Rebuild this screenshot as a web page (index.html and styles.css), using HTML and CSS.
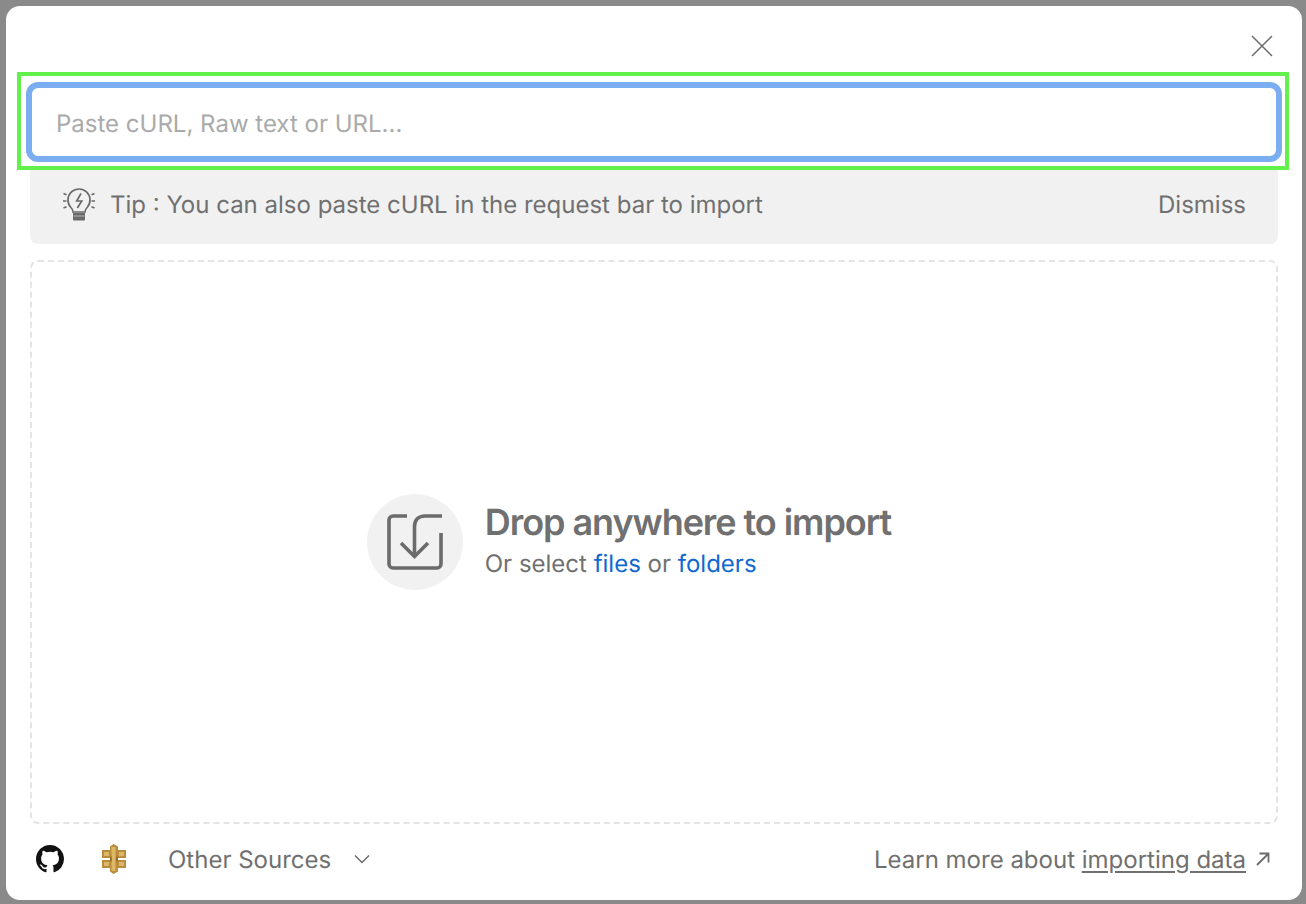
FILE: index.html
```html
<!DOCTYPE html>
<html lang="en">
<head>
<meta charset="utf-8">
<title>Import</title>
<link rel="stylesheet" href="styles.css">
</head>
<body>
<main class="modal">
  <header class="modal-head">
    <button class="close" aria-label="Close">
      <svg width="24" height="24" viewBox="0 0 24 24" fill="none" stroke="#6b6b6b" stroke-width="1.5"><path d="M2 2l20 20M22 2L2 22"/></svg>
    </button>
  </header>
  <div class="highlight">
    <div class="field">Paste cURL, Raw text or URL...</div>
  </div>
  <div class="tip">
    <div class="tip-main">
      <svg class="tip-icon" width="34" height="36" viewBox="0 0 34 36" fill="none" stroke="#6b6b6b" stroke-width="1.700">
        <path d="M11 26c0-2-1-3.500-2.500-5a11 11 0 1 1 17 0c-1.500 1.500-2.500 3-2.500 5z"/>
        <path d="M11 27h12v6.500a1 1 0 0 1-1 1H12a1 1 0 0 1-1-1z" fill="#6b6b6b" stroke="none"/>
        <path d="M11.500 30h11" stroke="#b4b4b4" stroke-width="1"/>
        <path d="M19 7.500l-4.300 7.500h5l-4.300 7"/>
        <path d="M1.500 7.500l3 1.300M1 15h3.500M1.500 22l3-1.300M32.500 7.500l-3 1.300M33 15h-3.500M32.500 22l-3-1.300"/>
      </svg>
      <span>Tip : You can also paste cURL in the request bar to import</span>
    </div>
    <span>Dismiss</span>
  </div>
  <section class="drop">
    <div class="drop-badge">
      <svg width="58" height="58" viewBox="0 0 58 58" fill="none" stroke="#6b6b6b" stroke-width="3.600">
        <path d="M21 3H7a4 4 0 0 0-4 4v44a4 4 0 0 0 4 4h44a4 4 0 0 0 4-4V20"/>
        <path d="M56 3H39c-7 0-10.500 4.500-10.500 11v28"/>
        <path d="M15 30l13.500 13.500L42 30"/>
      </svg>
    </div>
    <div class="drop-text">
      <h1 class="drop-title">Drop anywhere to import</h1>
      <p class="drop-sub">Or select <a class="link">files</a> or <a class="link">folders</a></p>
    </div>
  </section>
  <footer class="foot">
    <div class="foot-left">
      <svg class="gh" width="28" height="28" viewBox="0 0 16 16" fill="#111"><path d="M8 0C3.580 0 0 3.580 0 8c0 3.540 2.290 6.530 5.470 7.590.4.070.55-.17.55-.38 0-.19-.01-.82-.01-1.490-2.010.37-2.530-.49-2.690-.94-.09-.23-.48-.94-.82-1.130-.28-.15-.68-.52-.01-.53.630-.01 1.080.58 1.230.82.720 1.210 1.870.87 2.330.66.070-.52.280-.87.510-1.070-1.780-.2-3.640-.89-3.640-3.950 0-.87.310-1.590.820-2.150-.08-.2-.36-1.020.08-2.120 0 0 .67-.21 2.200.82a7.420 7.420 0 0 1 4 0c1.530-1.040 2.200-.82 2.200-.82.440 1.100.16 1.920.08 2.120.51.560.82 1.270.82 2.150 0 3.070-1.870 3.750-3.650 3.950.29.250.54.730.54 1.480 0 1.070-.01 1.930-.01 2.200 0 .21.150.46.550.38A8.010 8.010 0 0 0 16 8c0-4.420-3.580-8-8-8z"/></svg>
      <svg class="brand" width="26" height="30" viewBox="0 0 26 30">
        <path fill="#b98d3d" d="M9 2.500L12.500 0 17 2.500V6h8v8h-8v2h8v8h-8v3.500L12.500 30 9 27.500V24H1v-8h8v-2H1V6h8z"/>
        <path fill="#dcb766" d="M10.500 3h4v24h-4zM3 8h5v4H3zM18 8h5v4h-5zM3 18h5v4H3zM18 18h5v4h-5z"/>
        <path fill="#7e5f22" d="M9 12.500h2v5H9zM15 12.500h2v5h-2z" opacity=".6"/>
      </svg>
      <span class="sources">Other Sources
        <svg width="18" height="18" viewBox="0 0 18 18" fill="none" stroke="#6b6b6b" stroke-width="1.500"><path d="M2 5.500l7 7 7-7"/></svg>
      </span>
    </div>
    <div class="learn">
      <span>Learn more about <a class="under">importing data</a></span>
      <svg width="14" height="14" viewBox="0 0 14 14" fill="none" stroke="#6b6b6b" stroke-width="1.800"><path d="M1 13L12 2M3.500 1.500h9v9"/></svg>
    </div>
  </footer>
</main>
</body>
</html>
```
FILE: styles.css
```css
* { box-sizing: border-box; }
html, body { height: 100%; }
body {
  margin: 0;
  padding: 6px 4px 4px 6px;
  background: #8a8a8a;
  font-family: Inter, "Liberation Sans", sans-serif;
  color: #707070;
  text-rendering: geometricPrecision;
  overflow: hidden;
}
.modal {
  height: 100%;
  background: #fff;
  border-radius: 14px;
  padding: 0 24px;
  display: flex;
  flex-direction: column;
}
.modal-head {
  height: 66px;
  flex: none;
  display: flex;
  justify-content: flex-end;
  align-items: flex-start;
  padding-top: 28px;
}
.close {
  margin: 0 4px 0 0;
  padding: 0;
  border: 0;
  background: none;
  width: 24px;
  height: 24px;
  display: block;
}
.highlight {
  flex: none;
  height: 98px;
  margin: 0 -11px 0 -13px;
  padding: 6px 3px 4px 5px;
  border: 4px solid #62f04a;
  position: relative;
  z-index: 1;
}
.field {
  height: 80px;
  border: 6px solid #7aaef0;
  border-radius: 12px;
  padding: 2px 24px 0;
  display: flex;
  align-items: center;
  font-size: 24px;
  color: #aaaaaa;
}
.tip {
  flex: none;
  height: 74px;
  background: #f1f1f1;
  border-radius: 0 0 8px 8px;
  padding: 0 32px 6px;
  display: flex;
  align-items: center;
  justify-content: space-between;
  font-size: 24px;
}
.tip-main {
  display: flex;
  align-items: center;
  gap: 14px;
}
.tip-icon { display: block; }
.drop {
  flex: 1;
  margin-top: 16px;
  padding-right: 50px;
  border: 2px dashed #e4e4e4;
  border-radius: 8px;
  display: flex;
  align-items: center;
  justify-content: center;
  gap: 22px;
}
.drop-badge {
  width: 96px;
  height: 96px;
  border-radius: 50%;
  background: #f1f1f1;
  display: flex;
  align-items: center;
  justify-content: center;
}
.drop-text { padding-bottom: 4px; }
.drop-title {
  margin: 0 0 4px;
  font-size: 36px;
  line-height: 44px;
  font-weight: 600;
  letter-spacing: -1.06px;
}
.drop-sub {
  margin: 0;
  font-size: 24px;
  line-height: 32px;
}
.link { color: #0f68d0; }
.foot {
  flex: none;
  height: 76px;
  padding: 0 8px 6px 0;
  display: flex;
  align-items: center;
  justify-content: space-between;
  font-size: 24px;
}
.foot-left {
  display: flex;
  align-items: center;
}
.gh { margin-left: 6px; }
.brand { margin-left: 37px; }
.sources {
  margin-left: 41px;
  display: flex;
  align-items: center;
  gap: 22px;
}
.learn {
  display: flex;
  align-items: center;
  gap: 10px;
}
.under {
  text-decoration: underline;
  text-decoration-thickness: 2px;
  text-underline-offset: 3px;
}
```
